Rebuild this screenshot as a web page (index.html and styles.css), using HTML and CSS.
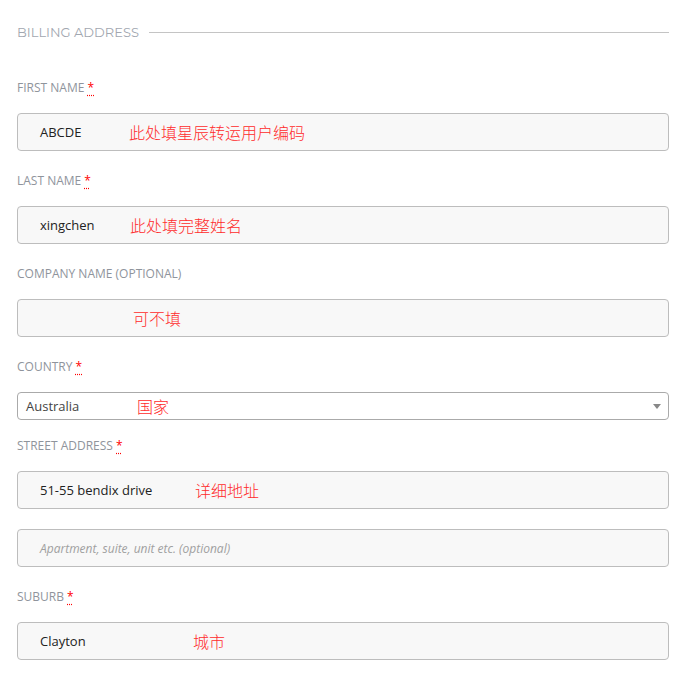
FILE: index.html
```html
<!DOCTYPE html>
<html lang="en">
<head>
    <meta charset="UTF-8">
    <meta name="viewport" content="width=device-width, initial-scale=1.0">
    <link rel="stylesheet" href="styles.css">
    <title>Billing Address</title>
</head>
<body>
    <section class="billing">
        <!-- Section title with rule -->
        <h3 class="section-title"><span>Billing Address</span></h3>

        <div class="field">
            <label class="field-label">First Name <abbr class="required" title="required">*</abbr></label>
            <div class="text-box">
                <span class="value w-first">ABCDE</span>
                <span class="note">此处填星辰转运用户编码</span>
            </div>
        </div>

        <div class="field">
            <label class="field-label">Last Name <abbr class="required" title="required">*</abbr></label>
            <div class="text-box">
                <span class="value w-last">xingchen</span>
                <span class="note">此处填完整姓名</span>
            </div>
        </div>

        <div class="field">
            <label class="field-label">Company Name (Optional)</label>
            <div class="text-box">
                <span class="value w-company"></span>
                <span class="note">可不填</span>
            </div>
        </div>

        <div class="field field-select">
            <label class="field-label">Country <abbr class="required" title="required">*</abbr></label>
            <div class="select-box">
                <span class="value w-country">Australia</span>
                <span class="note">国家</span>
                <span class="arrow"></span>
            </div>
        </div>

        <div class="field">
            <label class="field-label">Street Address <abbr class="required" title="required">*</abbr></label>
            <div class="text-box">
                <span class="value w-street">51-55 bendix drive</span>
                <span class="note">详细地址</span>
            </div>
            <div class="text-box">
                <span class="placeholder">Apartment, suite, unit etc. (optional)</span>
            </div>
        </div>

        <div class="field">
            <label class="field-label">Suburb <abbr class="required" title="required">*</abbr></label>
            <div class="text-box">
                <span class="value w-suburb">Clayton</span>
                <span class="note">城市</span>
            </div>
        </div>
    </section>
</body>
</html>
```

FILE: styles.css
```css
body {
    margin: 0;
    padding: 0;
    background-color: #fff;
    font-family: 'Open Sans', 'Noto Sans', sans-serif;
}
.billing {
    padding: 22px 22px 0 17px;
}
/* Section title */
.section-title {
    display: flex;
    align-items: center;
    gap: 10px;
    margin: 0 0 36px;
    height: 20px;
    font-family: 'Montserrat', 'Open Sans', sans-serif;
    font-size: 13px;
    font-weight: 400;
    color: #a2a7b0;
    text-transform: uppercase;
}
.section-title::after {
    content: "";
    flex: 1;
    height: 1px;
    background-color: #c4c4c4;
}
/* Fields */
.field {
    display: flex;
    flex-direction: column;
    gap: 20px;
    margin-bottom: 20px;
}
.field-label {
    display: block;
    height: 18px;
    line-height: 20px;
    margin-bottom: -3px;
    font-size: 12px;
    color: #8f949c;
    text-transform: uppercase;
}
.required {
    color: #f00;
    text-decoration: underline dotted #f00;
    text-underline-offset: 3px;
    border: none;
}
.text-box {
    display: flex;
    align-items: center;
    height: 36px;
    padding-left: 22px;
    border: 1px solid #bdbdbd;
    border-radius: 4px;
    background-color: #f8f8f8;
}
.field-select {
    margin-bottom: 16px;
}
.select-box {
    position: relative;
    display: flex;
    align-items: center;
    height: 26px;
    padding-left: 8px;
    border: 1px solid #aaa;
    border-radius: 4px;
    background-color: #fff;
}
.arrow {
    position: absolute;
    right: 7px;
    top: 11px;
    width: 0;
    height: 0;
    border-left: 4px solid transparent;
    border-right: 4px solid transparent;
    border-top: 5px solid #888;
}
.value {
    flex: none;
    font-size: 13px;
    color: #222;
}
.w-first { width: 89px; }
.w-last { width: 90px; }
.w-company { width: 93px; }
.w-country { width: 111px; color: #444; }
.w-street { width: 155px; }
.w-suburb { width: 153px; }
.note {
    font-family: 'Noto Sans CJK SC', sans-serif;
    font-size: 16px;
    font-weight: 300;
    color: #ff2b2b;
}
.placeholder {
    font-size: 12px;
    font-style: italic;
    color: #a0a0a0;
}
```
